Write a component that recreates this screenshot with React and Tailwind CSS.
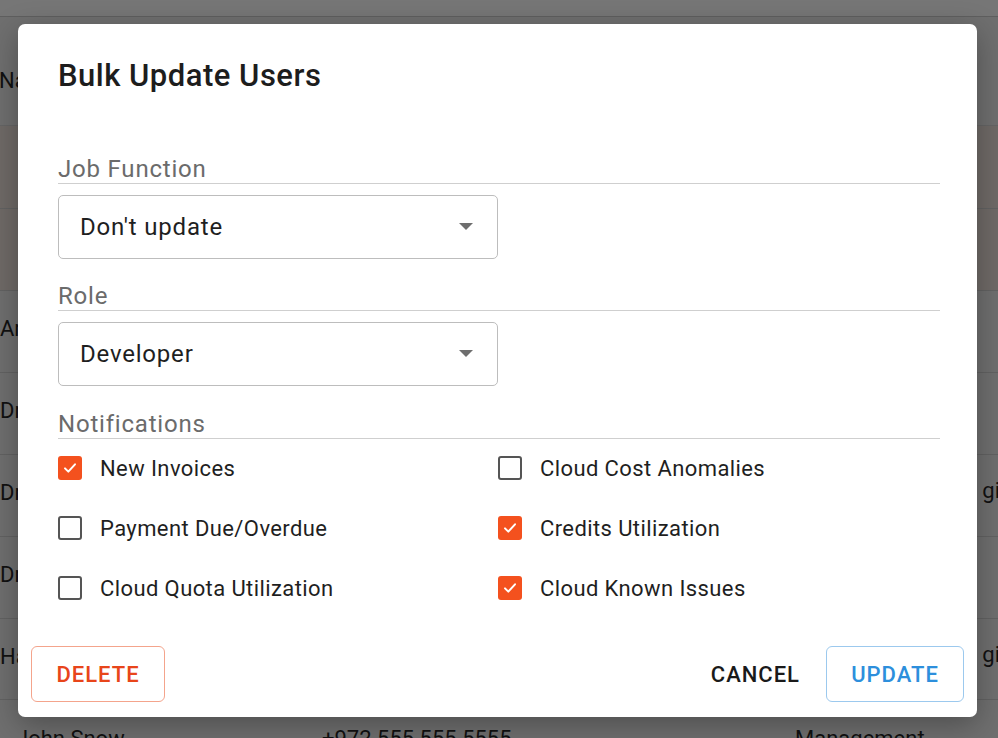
import { useState } from 'react';

const rows = [
  { h: 'h-[83px]', tint: true, left: '', right: '' },
  { h: 'h-[82px]', tint: true, left: '', right: '' },
  { h: 'h-[82px]', tint: false, left: 'Ar', right: '' },
  { h: 'h-[82px]', tint: false, left: 'Dr', right: '' },
  { h: 'h-[82px]', tint: false, left: 'Dr', right: 'gi' },
  { h: 'h-[82px]', tint: false, left: 'Dr', right: '' },
  { h: 'h-[81px]', tint: false, left: 'Ha', right: 'gi' },
];

const notifications = [
  { label: 'New Invoices', checked: true },
  { label: 'Cloud Cost Anomalies', checked: false },
  { label: 'Payment Due/Overdue', checked: false },
  { label: 'Credits Utilization', checked: true },
  { label: 'Cloud Quota Utilization', checked: false },
  { label: 'Cloud Known Issues', checked: true },
];

function Checkbox({ checked, onChange }) {
  return (
    <button
      onClick={onChange}
      className={
        checked
          ? 'w-6 h-6 rounded-[3px] bg-[#f4511e] flex items-center justify-center shrink-0'
          : 'w-6 h-6 rounded-[3px] border-2 border-[#555] bg-white shrink-0'
      }
    >
      {checked && (
        <svg width="16" height="16" viewBox="0 0 24 24" fill="none">
          <path d="M4.5 12.5l5 5 10-11" stroke="white" strokeWidth="3" strokeLinecap="round" strokeLinejoin="round" />
        </svg>
      )}
    </button>
  );
}

function Field({ label, value }) {
  return (
    <div className="flex flex-col">
      <div className="text-[24px] leading-[27px] tracking-[0.8px] text-[#6b6b6b] border-b border-[#cfcfcf]">{label}</div>
      <div className="mt-[11px] w-[440px] h-16 border border-[#bdbdbd] rounded-[5px] flex items-center justify-between pl-[21px] pr-[24px]">
        <span className="text-[24px] tracking-[0.8px] text-[#1f1f1f]">{value}</span>
        <svg width="14" height="8" viewBox="0 0 14 8">
          <path d="M0 0h14L7 7z" fill="#6e6e6e" />
        </svg>
      </div>
    </div>
  );
}

export default function App() {
  const [checks, setChecks] = useState(notifications.map((n) => n.checked));

  return (
    <div className="relative w-[998px] h-[738px] overflow-hidden bg-[#6f6f6f] font-['Roboto',sans-serif] text-[#111]">
      {/* page behind the dialog */}
      <div className="h-[17px] bg-[#767676] border-b border-[#5f5f5f]" />
      <div className="h-[109px] border-b border-[#656565] flex items-center text-[22px] pt-[18px]">
        <span className="-ml-[1px]">Na</span>
      </div>
      {rows.map((r, i) => (
        <div
          key={i}
          className={`${r.h} border-b border-[#626262] flex items-center justify-between text-[22px] ${r.tint ? 'bg-[#6f6a67]' : ''}`}
        >
          <span className="-mt-[6px]">{r.left}</span>
          <span className="-mr-[2px] -mt-[10px]">{r.right}</span>
        </div>
      ))}
      <div className="flex text-[22px] pt-[22px]">
        <span className="pl-[16px] w-[322px]">John Snow</span>
        <span className="w-[473px]">+972 555 555 5555</span>
        <span>Management</span>
      </div>

      {/* dialog */}
      <div className="absolute left-[18px] top-[24px] w-[959px] bg-white rounded-[7px] shadow-[0_8px_30px_rgba(0,0,0,0.3)] flex flex-col">
        <h2 className="pl-10 pt-[35px] text-[31px] leading-[34px] tracking-[0.5px] font-medium text-[#1d1d1d]">Bulk Update Users</h2>

        <div className="pl-10 pr-[37px] mt-[63px] flex flex-col">
          <Field label="Job Function" value="Don't update" />
          <div className="mt-6">
            <Field label="Role" value="Developer" />
          </div>
          <div className="mt-[25px] flex flex-col">
            <div className="text-[24px] leading-[27px] tracking-[0.8px] text-[#6b6b6b] border-b border-[#cfcfcf]">Notifications</div>
            <div className="mt-[9px] grid grid-cols-[440px_1fr] gap-y-5">
              {notifications.map((n, i) => (
                <label key={n.label} className="h-10 flex items-center gap-[18px] cursor-pointer">
                  <Checkbox
                    checked={checks[i]}
                    onChange={() => setChecks(checks.map((c, j) => (j === i ? !c : c)))}
                  />
                  <span className="text-[22px] tracking-[0.4px] text-[#1f1f1f]">{n.label}</span>
                </label>
              ))}
            </div>
          </div>
        </div>

        <div className="mt-[38px] pb-[15px] px-[13px] flex items-center justify-between">
          <button className="w-[134px] h-14 border border-[#f4a48c] rounded-[6px] text-[#e8451a] text-[22px] font-medium tracking-[1px]">
            DELETE
          </button>
          <div className="flex items-center gap-[26px]">
            <button className="text-[22px] font-medium tracking-[1px] text-[#1a1a1a]">CANCEL</button>
            <button className="w-[138px] h-14 border border-[#9cc9ee] rounded-[6px] text-[#2d8fdc] text-[22px] font-medium tracking-[1px]">
              UPDATE
            </button>
          </div>
        </div>
      </div>
    </div>
  );
}
